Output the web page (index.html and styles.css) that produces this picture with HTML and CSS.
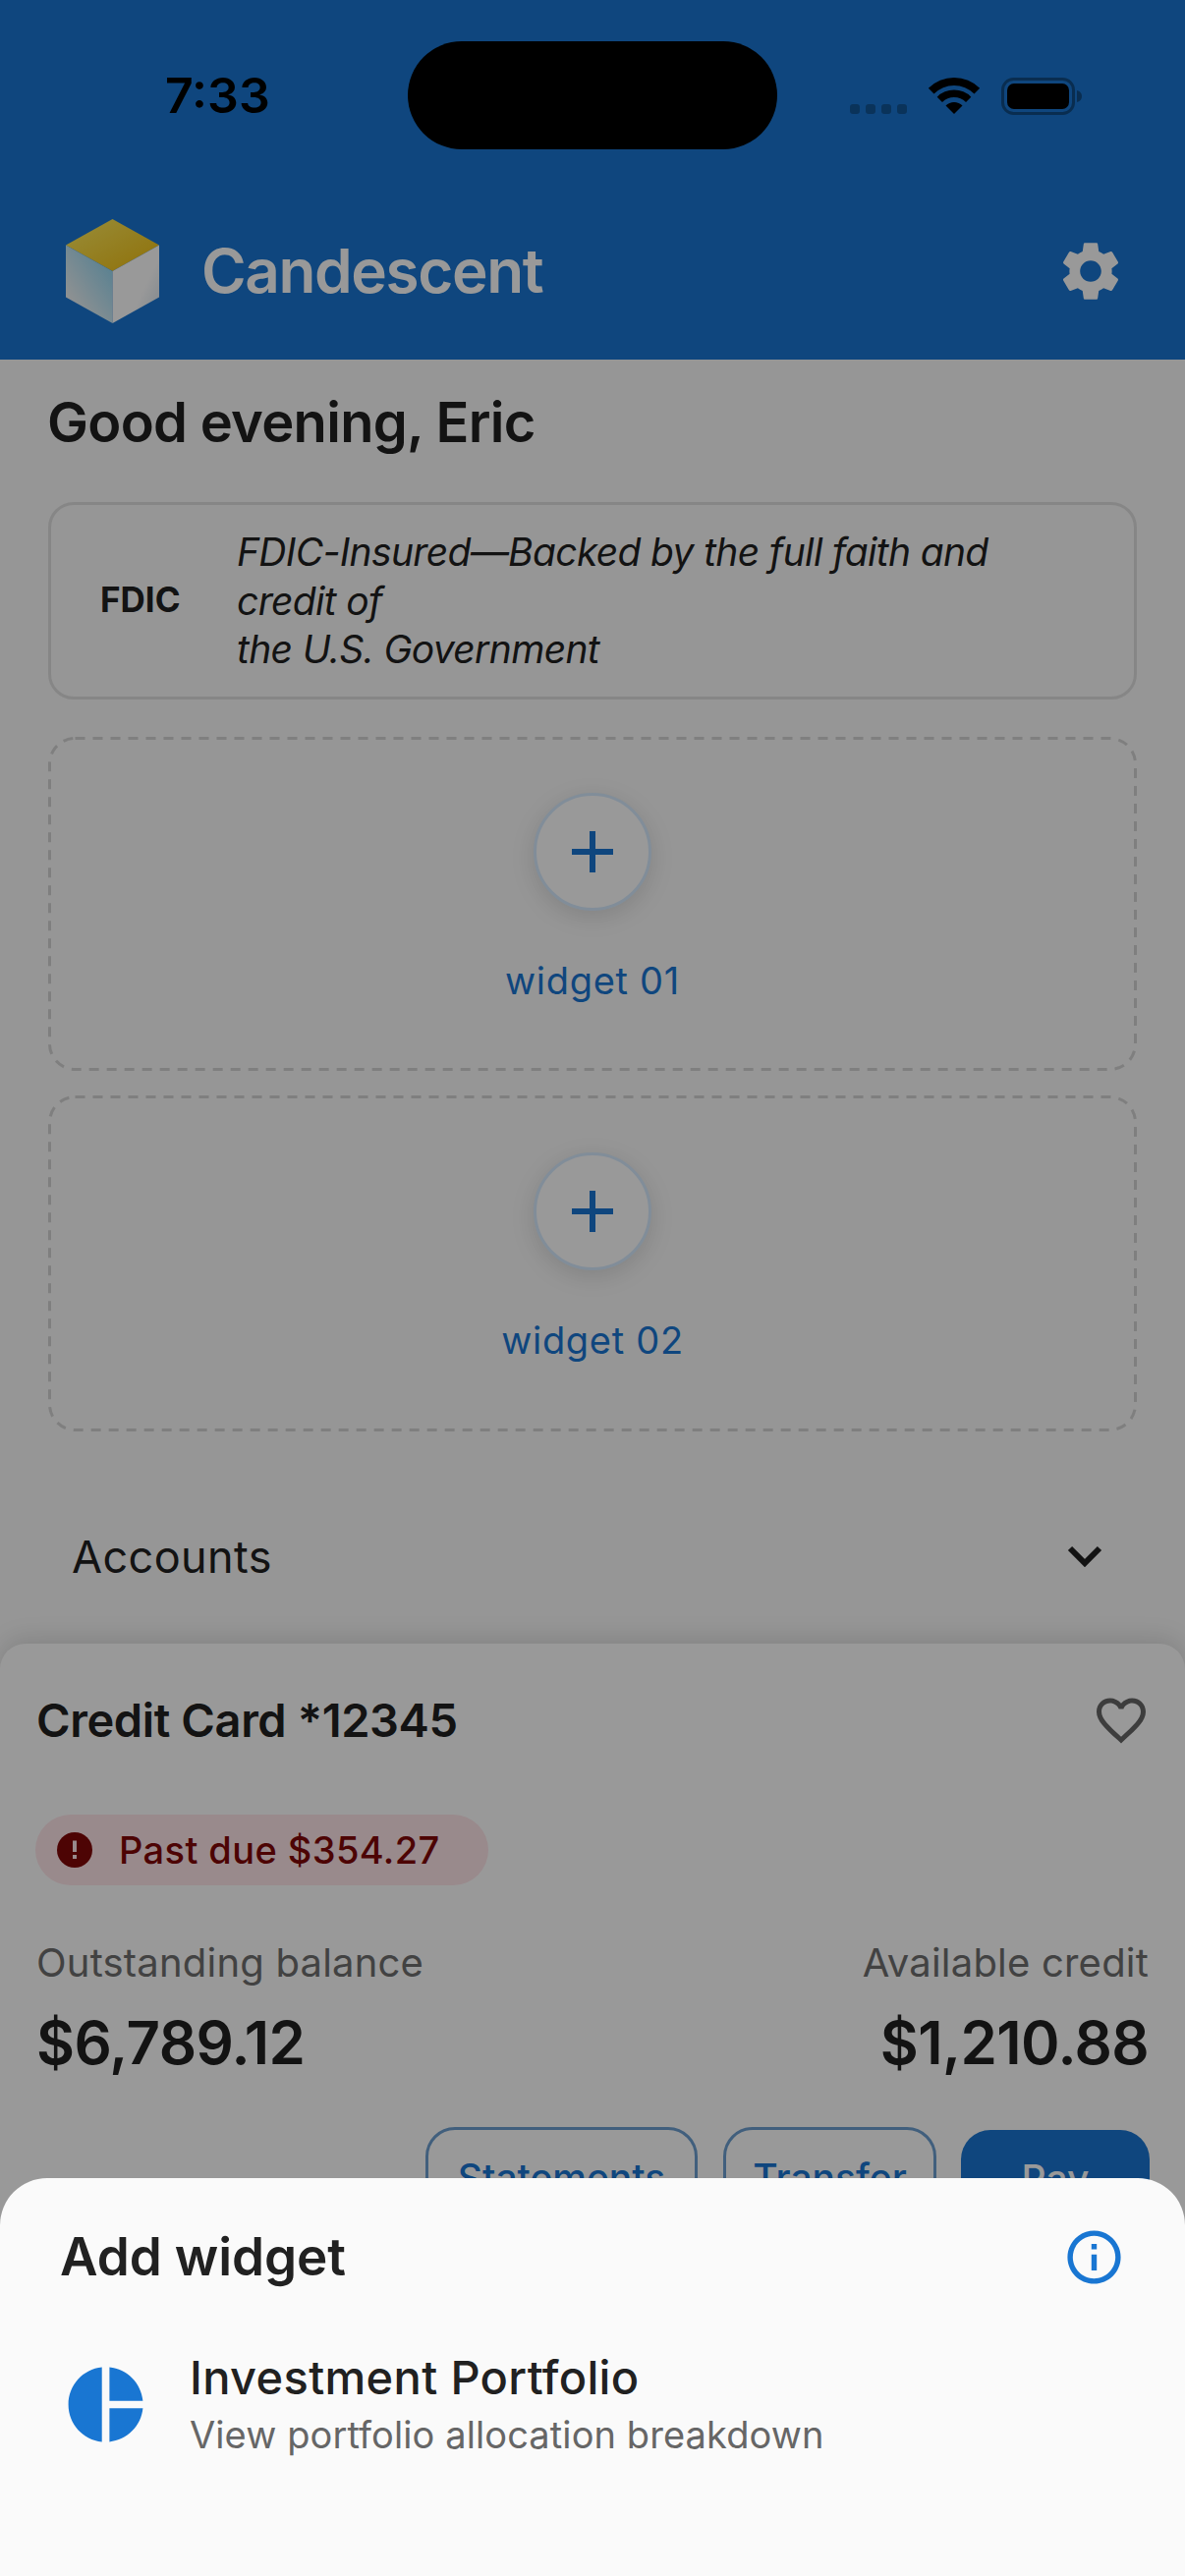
FILE: index.html
```html
<!DOCTYPE html>
<html lang="en">
<head>
<meta charset="utf-8">
<title>Candescent</title>
<link rel="stylesheet" href="styles.css">
</head>
<body>
<div class="screen">
  <header class="header">
    <div class="status">
      <div class="time-slot"><span class="time">7:33</span></div>
      <div class="island"></div>
      <div class="status-icons">
        <div class="signal"><i></i><i></i><i></i><i></i></div>
        <svg class="wifi" viewBox="0 0 52 37"><path d="M-.16 10.840A37 37 0 0 1 52.160 10.840L46.500 16.500A29 29 0 0 0 5.500 16.500Z"/><path d="M8.680 19.680A24.500 24.500 0 0 1 43.320 19.680L38.020 25A17 17 0 0 0 13.980 25Z"/><path d="M17.510 28.510A12 12 0 0 1 34.490 28.510L26 37Z"/></svg>
        <svg class="battery" viewBox="0 0 82 38"><rect x="1.500" y="1.500" width="72" height="35" rx="11" class="batt-frame"/><rect x="6" y="6" width="63" height="26" rx="7"/><path d="M77 13 C81 14 82 17 82 19 C82 21 81 24 77 25Z" class="batt-cap"/></svg>
      </div>
    </div>
    <div class="brand">
      <svg class="logo" viewBox="0 0 95 106">
        <defs>
          <linearGradient id="gTop" x1="0" y1="0" x2="1" y2="1"><stop offset="0" stop-color="#ffec60"/><stop offset="1" stop-color="#efbc10"/></linearGradient>
          <linearGradient id="gLeft" x1="0.9" y1="0.1" x2="0.2" y2="0.9"><stop offset="0" stop-color="#8fd6f2"/><stop offset="1" stop-color="#f4f4f4"/></linearGradient>
          <linearGradient id="gRight" x1="0.9" y1="0.9" x2="0.3" y2="0.4"><stop offset="0" stop-color="#dfe8f0"/><stop offset="0.5" stop-color="#ffffff"/></linearGradient>
        </defs>
        <path d="M47.500 0 95 26.500 47.500 53 0 26.500Z" fill="url(#gTop)"/>
        <path d="M0 26.500 47.500 53V106L0 79.500Z" fill="url(#gLeft)"/>
        <path d="M95 26.500 47.500 53V106L95 79.500Z" fill="url(#gRight)"/>
      </svg>
      <span class="brand-name">Candescent</span>
      <svg class="gear" viewBox="0 0 24 24"><path d="M19.140 12.940c.04-.3.060-.61.060-.94 0-.32-.020-.64-.070-.94l2.030-1.580c.18-.14.230-.41.120-.61l-1.920-3.320c-.12-.22-.37-.29-.59-.22l-2.390.96c-.5-.38-1.030-.7-1.620-.94l-.36-2.540c-.04-.24-.24-.41-.48-.41h-3.840c-.24 0-.43.170-.47.41l-.36 2.540c-.59.24-1.130.57-1.620.94l-2.390-.96c-.22-.08-.47 0-.59.22L2.740 8.870c-.12.21-.08.47.12.61l2.030 1.580c-.05.3-.09.63-.09.94s.020.64.070.94l-2.030 1.580c-.18.14-.23.41-.12.61l1.920 3.320c.12.22.37.29.59.22l2.390-.96c.5.38 1.030.7 1.620.94l.36 2.540c.05.24.24.41.48.41h3.840c.24 0 .44-.17.47-.41l.36-2.540c.59-.24 1.130-.56 1.620-.94l2.390.96c.22.080.47 0 .59-.22l1.920-3.320c.12-.22.070-.47-.12-.61l-2.010-1.580zM12 15.600c-1.980 0-3.600-1.620-3.600-3.600s1.620-3.600 3.600-3.600 3.600 1.620 3.600 3.600-1.620 3.600-3.600 3.600z"/></svg>
    </div>
  </header>

  <main class="main">
    <h1 class="greeting">Good evening, Eric</h1>
    <section class="fdic">
      <span class="fdic-mark">FDIC</span>
      <p class="fdic-text">FDIC-Insured—Backed by the full faith and credit of<br>the U.S. Government</p>
    </section>
    <section class="slot slot-one">
      <svg class="slot-outline"><rect class="slot-dash"/></svg>
      <button class="add"><svg viewBox="0 0 42 42"><path d="M18 0h6v18h18v6H24v18h-6V24H0v-6h18z"/></svg></button>
      <span class="slot-label">widget 01</span>
    </section>
    <section class="slot slot-two">
      <svg class="slot-outline"><rect class="slot-dash"/></svg>
      <button class="add"><svg viewBox="0 0 42 42"><path d="M18 0h6v18h18v6H24v18h-6V24H0v-6h18z"/></svg></button>
      <span class="slot-label">widget 02</span>
    </section>
    <div class="accounts">
      <span>Accounts</span>
      <svg class="chevron" viewBox="0 0 36 22"><path d="M3 3 18 18 33 3"/></svg>
    </div>
  </main>

  <section class="card">
    <div class="card-head">
      <h2>Credit Card *12345</h2>
      <svg class="heart" viewBox="0 0 24 24"><path d="M16.500 3c-1.740 0-3.410.81-4.500 2.090C10.910 3.810 9.240 3 7.500 3 4.420 3 2 5.420 2 8.500c0 3.780 3.400 6.860 8.550 11.540L12 21.350l1.450-1.320C18.600 15.360 22 12.280 22 8.500 22 5.420 19.580 3 16.500 3zm-4.400 15.550l-.1.100-.1-.1C7.140 14.240 4 11.390 4 8.500 4 6.500 5.500 5 7.500 5c1.540 0 3.040.99 3.570 2.360h1.870C13.460 5.990 14.960 5 16.500 5c2 0 3.500 1.500 3.500 3.500 0 2.890-3.140 5.740-7.900 10.050z"/></svg>
    </div>
    <div class="pill">
      <svg viewBox="0 0 36 36"><circle cx="18" cy="18" r="18" class="pill-disc"/><rect x="16" y="8.500" width="4" height="11.500" class="pill-mark"/><rect x="16" y="23" width="4" height="4" class="pill-mark"/></svg>
      <span>Past due $354.27</span>
    </div>
    <div class="figures">
      <div class="figure">
        <span class="fig-label">Outstanding balance</span>
        <span class="fig-value">$6,789.12</span>
      </div>
      <div class="figure figure-right">
        <span class="fig-label">Available credit</span>
        <span class="fig-value">$1,210.88</span>
      </div>
    </div>
    <div class="actions">
      <button class="btn btn-statements">Statements</button>
      <button class="btn btn-transfer">Transfer</button>
      <button class="btn btn-pay">Pay</button>
    </div>
  </section>

  <div class="scrim"></div>

  <aside class="sheet">
    <div class="sheet-head">
      <h2>Add widget</h2>
      <svg class="info" viewBox="0 0 24 24"><path d="M11 7h2v2h-2zm0 4h2v6h-2zm1-9C6.480 2 2 6.480 2 12s4.480 10 10 10 10-4.480 10-10S17.520 2 12 2zm0 18c-4.410 0-8-3.590-8-8s3.590-8 8-8 8 3.590 8 8-3.590 8-8 8z"/></svg>
    </div>
    <div class="sheet-row">
      <svg class="pie" viewBox="0 0 24 24"><path d="M11 2v20c-5.070-.5-9-4.790-9-10s3.930-9.500 9-10zm2.030 0v8.990H22c-.47-4.740-4.240-8.520-8.970-8.990zm0 11.010V22c4.740-.47 8.500-4.250 8.970-8.990h-8.970z"/></svg>
      <div class="sheet-text">
        <div class="sheet-title">Investment Portfolio</div>
        <div class="sheet-sub">View portfolio allocation breakdown</div>
      </div>
    </div>
  </aside>
</div>
</body>
</html>
```
FILE: styles.css
```css
* { box-sizing: border-box; }
html, body { margin: 0; padding: 0; }
body { font-family: Inter, "Liberation Sans", sans-serif; background: #fafafa; color: #212121; }
h1, h2, p { margin: 0; }

.screen { position: relative; width: 1206px; height: 2622px; overflow: hidden; background: #fafafa; }

/* header */
.header { height: 366px; background: #1976d2; display: flex; flex-direction: column; }
.status { display: flex; height: 152px; padding-top: 42px; }
.time-slot { width: 415px; height: 110px; display: flex; align-items: center; padding-left: 168px; }
.time { font-size: 50px; font-weight: 600; color: #000; line-height: 1; }
.island { width: 376px; height: 110px; border-radius: 55px; background: #000; }
.status-icons { display: flex; align-items: flex-start; padding-left: 74px; padding-top: 37px; }
.signal { display: flex; gap: 6px; margin-top: 27px; width: 58px; }
.signal i { display: block; width: 10px; height: 10px; border-radius: 3px; background: rgba(0,0,0,.28); }
.wifi { width: 52px; height: 37px; margin-left: 22px; fill: #000; overflow: visible; }
.battery { width: 82px; height: 38px; margin-left: 22px; fill: #000; }
.batt-frame { fill: none; stroke: rgba(0,0,0,.36); stroke-width: 3; }
.batt-cap { fill: rgba(0,0,0,.36); }

.brand { display: flex; align-items: flex-start; padding: 71px 0 0 67px; height: 214px; }
.logo { width: 95px; height: 106px; flex: none; }
.brand-name { margin-left: 43px; font-size: 62px; font-weight: 600; color: #fff; letter-spacing: -1.4px; line-height: 106px; }
.gear { width: 72px; height: 72px; margin: 17px 60px 0 auto; fill: #fff; }

/* main */
.main { padding: 30px 49px 0 49px; display: flex; flex-direction: column; }
.greeting { font-size: 56px; line-height: 68px; font-weight: 600; letter-spacing: -0.7px; color: #212121; margin-left: -1px; }
.fdic { margin-top: 47px; height: 201px; border: 3px solid #e0e0e0; border-radius: 26px; display: flex; align-items: center; padding-left: 50px; }
.fdic-mark { flex: none; width: 139px; font-size: 35px; font-weight: 700; position: relative; top: -2px; }
.fdic-text { font-size: 39px; font-style: italic; line-height: 49.500px; width: 800px; letter-spacing: -0.66px; }

.slot { position: relative; border-radius: 26px; display: flex; flex-direction: column; align-items: center; }
.slot-outline { position: absolute; inset: 0; width: 100%; height: 100%; }
.slot-dash { x: 1.500px; y: 1.500px; width: calc(100% - 3px); height: calc(100% - 3px); rx: 26px; ry: 26px; fill: none; stroke: #d4d4d4; stroke-width: 3; stroke-dasharray: 10 8; }
.slot-one { margin-top: 38px; height: 340px; padding-top: 57px; }
.slot-two { margin-top: 25px; height: 342px; padding-top: 58px; }
.add { width: 120px; height: 120px; padding: 0; border-radius: 50%; border: 3px solid #d8ecff; background: #fff; box-shadow: 0 6px 24px rgba(0,0,0,.13); display: flex; align-items: center; justify-content: center; }
.add svg { width: 42px; height: 42px; fill: #1976d2; }
.slot-label { margin-top: 46px; font-size: 38px; line-height: 50px; color: #1976d2; letter-spacing: 0.7px; }

.accounts { margin: 77px 0 39px 24px; height: 100px; display: flex; align-items: center; justify-content: space-between; padding-right: 35px; font-size: 45px; letter-spacing: 0.4px; color: #212121; }
.chevron { width: 36px; height: 22px; fill: none; stroke: #212121; stroke-width: 6; }

/* card */
.card { height: 640px; background: #fff; border-radius: 26px 26px 0 0; box-shadow: 0 -6px 24px rgba(0,0,0,.12); padding: 48px 37px 0 37px; display: flex; flex-direction: column; }
.card-head { display: flex; justify-content: space-between; align-items: center; height: 60px; }
.card-head h2 { font-size: 47px; font-weight: 600; line-height: 60px; letter-spacing: -0.4px; }
.heart { width: 60px; height: 60px; margin-right: -2px; fill: #666; }
.pill { margin: 66px 0 0 -1px; width: 461px; height: 72px; border-radius: 36px; background: #ffe6ea; display: flex; align-items: center; padding-left: 22px; font-size: 38px; font-weight: 500; letter-spacing: 0.4px; color: #800808; }
.pill svg { width: 36px; height: 36px; flex: none; margin-right: 27px; }
.pill-disc { fill: #800808; }
.pill-mark { fill: #ffe6ea; }
.figures { display: flex; justify-content: space-between; margin-top: 54px; }
.figure { display: flex; flex-direction: column; gap: 21px; }
.figure-right { align-items: flex-end; }
.fig-label { font-size: 40px; line-height: 50px; color: #6e6e6e; letter-spacing: 0.2px; }
.fig-value { font-size: 60px; line-height: 70px; font-weight: 600; color: #212121; letter-spacing: -0.6px; }
.actions { display: flex; justify-content: flex-end; align-items: flex-start; gap: 26px; margin-top: 51px; }
.btn { height: 102px; font: 500 39px/1 Inter, "Liberation Sans", sans-serif; border-radius: 30px; padding: 0; display: flex; justify-content: center; align-items: center; border: 3px solid #6d9fd0; background: #fff; color: #1976d2; }
.btn-statements { width: 277px; }
.btn-transfer { width: 217px; }
.btn-pay { width: 192px; height: 99px; margin: 3px -1px 0 -1px; border: none; background: #1976d2; color: #fff; }

/* overlay */
.scrim { position: absolute; inset: 0; background: rgba(0,0,0,.4); }
.sheet { position: absolute; left: 0; right: 0; top: 2217px; bottom: 0; background: #fafafa; border-radius: 48px 48px 0 0; padding: 50px 62px 0 61px; }
.sheet-head { display: flex; justify-content: space-between; align-items: center; height: 60px; }
.sheet-head h2 { font-size: 53px; line-height: 60px; font-weight: 600; letter-spacing: -0.1px; color: #212121; }
.info { width: 65px; height: 65px; margin-right: -2px; fill: #1976d2; }
.sheet-row { display: flex; align-items: center; margin-top: 65px; gap: 40px; }
.pie { width: 91px; height: 91px; flex: none; margin-left: 1px; fill: #1976d2; }
.sheet-title { font-size: 47px; line-height: 56px; font-weight: 500; letter-spacing: 0.35px; color: #212121; }
.sheet-sub { margin-top: 5px; font-size: 38px; line-height: 50px; color: #666; letter-spacing: 0.1px; }
```
